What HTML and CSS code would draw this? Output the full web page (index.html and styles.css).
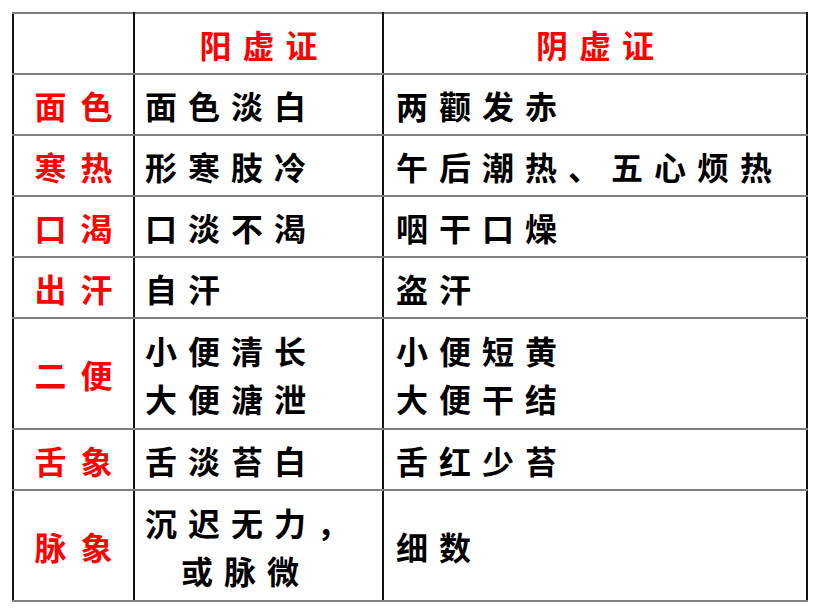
FILE: index.html
```html
<!DOCTYPE html>
<html lang="zh-CN">
<head>
<meta charset="utf-8">
<title>阳虚证与阴虚证</title>
<link rel="stylesheet" href="styles.css">
</head>
<body>
<table class="cmp">
  <colgroup>
    <col class="c1"><col class="c2"><col class="c3">
  </colgroup>
  <tr class="r1">
    <td class="cell lab"></td>
    <td class="cell head">阳虚证</td>
    <td class="cell head">阴虚证</td>
  </tr>
  <tr class="r1">
    <td class="cell lab">面色</td>
    <td class="cell v2">面色淡白</td>
    <td class="cell v3">两颧发赤</td>
  </tr>
  <tr class="r1">
    <td class="cell lab">寒热</td>
    <td class="cell v2">形寒肢冷</td>
    <td class="cell v3">午后潮热、五心烦热</td>
  </tr>
  <tr class="r1">
    <td class="cell lab">口渴</td>
    <td class="cell v2">口淡不渴</td>
    <td class="cell v3">咽干口燥</td>
  </tr>
  <tr class="r1">
    <td class="cell lab">出汗</td>
    <td class="cell v2">自汗</td>
    <td class="cell v3">盗汗</td>
  </tr>
  <tr class="r2">
    <td class="cell lab">二便</td>
    <td class="cell v2 two">小便清长<br>大便溏泄</td>
    <td class="cell v3 two">小便短黄<br>大便干结</td>
  </tr>
  <tr class="r1">
    <td class="cell lab">舌象</td>
    <td class="cell v2">舌淡苔白</td>
    <td class="cell v3">舌红少苔</td>
  </tr>
  <tr class="r2">
    <td class="cell lab">脉象</td>
    <td class="cell v2 two">沉迟无力，<br><span class="indent">或脉微</span></td>
    <td class="cell v3">细数</td>
  </tr>
</table>
</body>
</html>
```

FILE: styles.css
```css
html, body {
  margin: 0;
  padding: 0;
  background: #ffffff;
}
body {
  padding: 12px 0 0 12px;
  font-family: "Noto Sans CJK SC", "Noto Sans CJK TC", sans-serif;
  font-weight: 700;
  font-size: 32px;
  color: #000000;
}
.cmp {
  border-collapse: collapse;
  table-layout: fixed;
  width: 795px;
  border-left: 2px solid #111111;
  border-right: 2px solid #111111;
  border-top: 2px solid #808080;
  border-bottom: 2px solid #808080;
}
.c1 { width: 121px; }
.c2 { width: 249px; }
.c3 { width: 424px; }
.cell {
  border-left: 2px solid #111111;
  border-right: 2px solid #111111;
  border-top: 2px solid #808080;
  border-bottom: 2px solid #808080;
  padding: 0;
  vertical-align: middle;
  white-space: nowrap;
  letter-spacing: 11px;
  line-height: 40px;
}
.r1 { height: 61px; }
.r2 { height: 111px; }
.lab {
  color: #ff0000;
  text-align: center;
  letter-spacing: 14px;
  text-indent: 14px;
}
.head {
  color: #ff0000;
  text-align: center;
  letter-spacing: 11px;
  text-indent: 11px;
}
.v2 { padding-left: 10px; }
.v3 { padding-left: 12px; }
.two {
  line-height: 48px;
}
.indent {
  padding-left: 36px;
}
```
